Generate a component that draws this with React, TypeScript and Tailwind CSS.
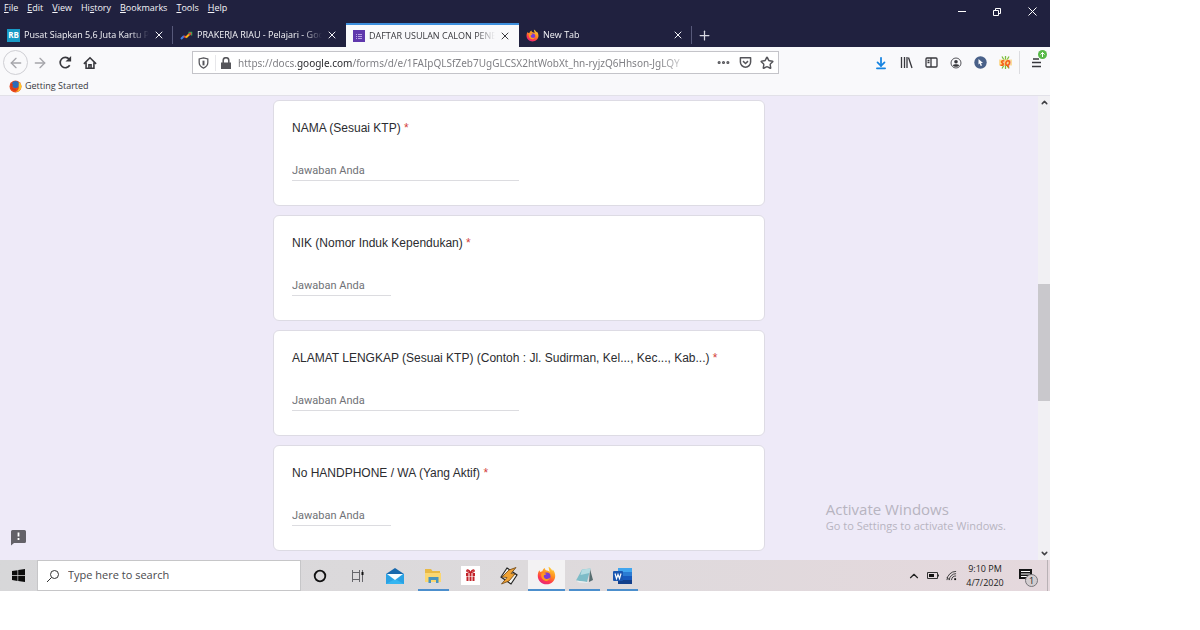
import { ReactNode } from "react";
import {
  ArrowDownToLine,
  ArrowLeft,
  ArrowRight,
  ChevronDown,
  ChevronUp,
  Ellipsis,
  Plus,
  Star,
  X,
} from "lucide-react";

const MENUS = [
  ["", "F", "ile"],
  ["", "E", "dit"],
  ["", "V", "iew"],
  ["Hi", "s", "tory"],
  ["", "B", "ookmarks"],
  ["", "T", "ools"],
  ["", "H", "elp"],
];

const QUESTIONS = [
  { id: "nama", label: "NAMA (Sesuai KTP)", long: true },
  { id: "nik", label: "NIK (Nomor Induk Kependukan)", long: false },
  {
    id: "alamat",
    label: "ALAMAT LENGKAP (Sesuai KTP) (Contoh : Jl. Sudirman, Kel..., Kec..., Kab...)",
    long: true,
  },
  { id: "hp", label: "No HANDPHONE / WA (Yang Aktif)", long: false },
];

function FirefoxIcon({ size }: { size: number }) {
  return (
    <svg width={size} height={size} viewBox="0 0 24 24" aria-hidden="true">
      <defs>
        <linearGradient id="fx" x1="0.8" y1="0" x2="0.3" y2="1">
          <stop offset="0" stopColor="#ffd83d" />
          <stop offset="0.45" stopColor="#ff8a1e" />
          <stop offset="0.75" stopColor="#ff3a4c" />
          <stop offset="1" stopColor="#e4267f" />
        </linearGradient>
      </defs>
      <path
        fill="url(#fx)"
        d="M3 5.500c.3 1 .6 1.500 1.200 2.100C5 7 6 6.700 6.800 6.700 7.200 5 8.300 3.300 10 2.600c-.2 1.200.3 2.100 1.300 2.900 2 .3 3.500.9 4.600 2.200-.2-2.700-1.200-4.600-1.300-6.700 2.200 1.200 3.700 2.800 4.600 5 .5-.4.700-1 .7-1.600C22 6.800 23 9.500 23 12.500 23 18.500 18 23 12 23S1 18.500 1 12.500C1 9.800 1.600 7.300 3 5.500z"
      />
      <circle cx="12.300" cy="12.800" r="4.700" fill="#7a3bd8" />
      <path
        fill="#ff9a22"
        d="M5.500 9.500c2.500-1.500 4.500-.5 6.500.6-1 .9-2.600.8-3.300 1.900-.6 1.600.6 3.800 3 4.300 2 .4 3.600-.4 4.800-1.700-.5 3-3 4.500-5.500 4.200-4-.5-6.500-4.500-5.500-9.300z"
      />
    </svg>
  );
}

function OldFirefoxIcon() {
  return (
    <svg width="13" height="13" viewBox="0 0 24 24" aria-hidden="true">
      <circle cx="12" cy="12" r="11" fill="#e8471c" />
      <circle cx="12" cy="8.500" r="6.500" fill="#2d6bb8" />
      <path d="M2 5c1.500 2 3 2.500 5 2.500 1 2-1.500 3-1 5.500s3 3.500 6 3l1 4-8-2z" fill="#d83a18" />
      <path fill="#ffc629" d="M18 3c5 3.500 6.500 9 3.500 14-2.500 4-6.500 5.500-10 5 5-2 7-6 6.500-10-.3-3.500.5-6 0-9z" />
    </svg>
  );
}

type TabProps = {
  title: string;
  icon: ReactNode;
  active?: boolean;
  separator?: boolean;
};

function Tab({ title, icon, active, separator }: TabProps) {
  return (
    <div
      className={
        active
          ? "flex h-6 w-[173px] items-center border-t-2 border-[#3d8fdd] bg-[#f9f9fb] pl-[7px] pr-2 text-[#38383d]"
          : "flex h-6 w-[173px] items-center pl-[7px] pr-2 text-[#f4f4f8]"
      }
    >
      <button
        type="button"
        className="flex min-w-0 flex-1 items-center gap-1 whitespace-nowrap"
      >
        <span className="shrink-0">{icon}</span>
        <span
          className={
            active
              ? "min-w-0 flex-1 text-left [mask-image:linear-gradient(to_right,black_85%,transparent)]"
              : "min-w-0 flex-1 text-left font-medium [mask-image:linear-gradient(to_right,black_85%,transparent)]"
          }
        >
          {title}
        </span>
      </button>
      <button type="button" aria-label={`Close ${title}`} className="ml-1 shrink-0">
        <X size={12} strokeWidth={2} />
      </button>
      {separator && <span className="-mr-2 ml-[7px] h-[18px] w-px bg-[#57597a]" />}
    </div>
  );
}

function TitleBar() {
  return (
    <header className="bg-[#20213f]">
      <div className="flex h-[23px] items-start justify-between">
        <nav className="flex gap-[9px] pl-1 text-[9px] leading-4 text-[#f4f4f8]">
          {MENUS.map(([before, key, after]) => (
            <button type="button" key={before + key + after}>
              {before}
              <span className="underline">{key}</span>
              {after}
            </button>
          ))}
        </nav>
        <div className="flex h-[22px] items-center gap-6 pr-3 text-white">
          <button type="button" aria-label="Minimize">
            <svg width="11" height="11" viewBox="0 0 11 11" stroke="currentColor">
              <path d="M1 5.500h8" />
            </svg>
          </button>
          <button type="button" aria-label="Restore">
            <svg width="11" height="11" viewBox="0 0 11 11" fill="none" stroke="currentColor">
              <path d="M1.500 4.500h5v5h-5zM3.500 4V2.500h5v5H7" />
            </svg>
          </button>
          <button type="button" aria-label="Close window">
            <svg width="11" height="11" viewBox="0 0 11 11" fill="none" stroke="currentColor">
              <path d="M1.500 1.500l8 8M9.500 1.500l-8 8" />
            </svg>
          </button>
        </div>
      </div>
      <div className="flex items-center text-[9px] leading-4">
        <Tab
          title="Pusat Siapkan 5,6 Juta Kartu Pra"
          separator
          icon={
            <span className="flex h-[13px] w-[13px] items-center justify-center bg-[#189ac6] text-[8px] font-bold text-white">
              RB
            </span>
          }
        />
        <Tab
          title="PRAKERJA RIAU - Pelajari - Goo"
          icon={
            <svg width="13" height="13" viewBox="0 0 13 13" fill="none" strokeWidth="2" aria-hidden="true">
              <path d="M1 10l3-3" stroke="#3f7de8" />
              <path d="M4 7l2 1.500" stroke="#e5443a" />
              <path d="M6 8.500L9.500 5" stroke="#f6b913" />
              <path d="M8.500 3.500H11.500V6.500" stroke="#38a853" strokeWidth="1.500" />
              <path d="M9 6l2-2" stroke="#e5443a" />
            </svg>
          }
        />
        <Tab
          title="DAFTAR USULAN CALON PENE"
          active
          icon={
            <svg width="12" height="12" viewBox="0 0 12 12" aria-hidden="true">
              <path d="M0 0h12v12H0z" fill="#6038ad" />
              <path d="M3 4.500h1M5 4.500h4M3 6.500h1M5 6.500h4M3 8.500h1M5 8.500h4" stroke="#b9a4e2" />
            </svg>
          }
        />
        <Tab title="New Tab" separator icon={<FirefoxIcon size={13} />} />
        <button type="button" aria-label="Open a new tab" className="ml-[5px] text-[#d8d8e2]">
          <Plus size={15} strokeWidth={2} />
        </button>
      </div>
    </header>
  );
}

function NavBar() {
  return (
    <div className="flex h-[31px] items-center bg-[#f9f9fb] pl-[3px] text-[#38383d]">
      <div className="flex w-[189px] shrink-0 items-center">
        <button
          type="button"
          aria-label="Back"
          className="flex h-[25px] w-[25px] items-center justify-center rounded-full border border-[#cfcfd4] text-[#a5a5aa]"
        >
          <ArrowLeft size={16} strokeWidth={2} />
        </button>
        <button type="button" aria-label="Forward" className="ml-1 text-[#a5a5aa]">
          <ArrowRight size={16} strokeWidth={2} />
        </button>
        <button type="button" aria-label="Reload" className="ml-2.5">
          <svg width="15" height="15" viewBox="0 0 16 16" fill="none" stroke="currentColor" strokeWidth="1.800">
            <path d="M12.500 11A5.500 5.500 0 1 1 12 4.500" />
            <path d="M14 1v6H8z" fill="currentColor" stroke="none" />
          </svg>
        </button>
        <button type="button" aria-label="Home" className="ml-2.5">
          <svg width="14" height="14" viewBox="0 0 16 16" fill="none" stroke="currentColor" strokeWidth="1.800">
            <path d="M1 9l7-7 7 7M3.500 7.500V14h9V7.500" />
            <path d="M6.800 14v-4h2.400v4" />
          </svg>
        </button>
      </div>
      <div className="flex h-[23px] min-w-0 max-w-[587px] flex-1 items-center border border-[#c4c4c9] bg-white">
        <button type="button" aria-label="Tracking protection" className="ml-[5px]">
          <svg width="11" height="12" viewBox="0 0 14 15" fill="none" stroke="#55555a" strokeWidth="1.600">
            <path d="M7 1l5.500 1.300V7c0 3.500-2.500 5.800-5.500 7C4 12.800 1.500 10.500 1.500 7V2.300z" />
            <path d="M7 4.500v6" strokeWidth="2.500" />
          </svg>
        </button>
        <span className="ml-1.5 h-4 w-px bg-[#e7e7ea]" />
        <svg width="10" height="12" viewBox="0 0 10 12" className="ml-[5px] shrink-0" aria-hidden="true">
          <path d="M0 5.500h10V12H0z" fill="#55555a" />
          <path d="M2.200 6V3.500a2.800 2.800 0 0 1 5.600 0V6" fill="none" stroke="#55555a" strokeWidth="1.500" />
        </svg>
        <label
          htmlFor="address"
          className="relative ml-[7px] min-w-0 flex-1 whitespace-nowrap font-['Noto_Sans',sans-serif] text-[10px] leading-5 text-[#808085] [mask-image:linear-gradient(to_right,black_93%,transparent)]"
        >
          https://docs.<span className="text-[#2a2a2e]">google.com</span>
          /forms/d/e/1FAIpQLSfZeb7UgGLCSX2htWobXt_hn-ryjzQ6Hhson-JgLQY
          <input id="address" type="text" className="absolute inset-0 bg-transparent outline-none" />
        </label>
        <div className="ml-6 mr-1 flex items-center gap-2 text-[#55555a]">
          <button type="button" aria-label="Page actions">
            <Ellipsis size={15} strokeWidth={3} />
          </button>
          <button type="button" aria-label="Save to Pocket">
            <svg width="13" height="13" viewBox="0 0 14 14" fill="none" stroke="currentColor" strokeWidth="1.600">
              <path d="M1.500 2h11v4.500a5.500 5.500 0 0 1-11 0z" strokeLinejoin="round" />
              <path d="M4.300 5.500L7 8l2.700-2.500" />
            </svg>
          </button>
          <button type="button" aria-label="Bookmark this page">
            <Star size={14} strokeWidth={2.500} />
          </button>
        </div>
      </div>
      <div className="ml-auto flex shrink-0 items-center gap-[7px] pr-[7px]">
        <div className="flex items-center gap-3">
          <button type="button" aria-label="Downloads" className="text-[#1583e0]">
            <ArrowDownToLine size={14} strokeWidth={3} />
          </button>
          <button type="button" aria-label="Library">
            <svg width="13" height="13" viewBox="0 0 13 13" fill="none" stroke="currentColor" strokeWidth="1.300">
              <path d="M1.500 1v11M4.500 1v11M7 1v11M8.500 1.500l3.500 10.500" />
            </svg>
          </button>
          <button type="button" aria-label="Sidebars">
            <svg width="13" height="13" viewBox="0 0 13 13" fill="none" stroke="currentColor" strokeWidth="1.300">
              <rect x="1" y="2" width="11" height="9" rx="1" />
              <path d="M6 2v9M2.500 4.500h2M2.500 6.500h2" />
            </svg>
          </button>
          <button type="button" aria-label="Account">
            <svg width="12" height="12" viewBox="0 0 12 12" aria-hidden="true">
              <circle cx="6" cy="6" r="5" fill="none" stroke="#55555a" />
              <circle cx="6" cy="4.800" r="1.800" fill="#38383d" />
              <path d="M2.800 8.200C4 6.900 8 6.900 9.200 8.200 8 10.300 4 10.300 2.800 8.200z" fill="#38383d" />
            </svg>
          </button>
          <button type="button" aria-label="Pointer extension">
            <svg width="13" height="13" viewBox="0 0 13 13" aria-hidden="true">
              <circle cx="6.500" cy="6.500" r="6.200" fill="#4a6189" />
              <path d="M4.500 3l4.500 4H7l1 2.500-1.300.5-1-2.500-1.200 1z" fill="#fff" />
            </svg>
          </button>
          <button
            type="button"
            aria-label="SQ extension"
            className="relative flex h-[13px] w-[13px] items-center justify-center text-[8px] font-extrabold italic leading-none text-[#f2600f]"
          >
            <svg width="13" height="13" viewBox="0 0 13 13" fill="none" className="absolute inset-0" aria-hidden="true">
              <path d="M6.500 0v13M3 .5l7 12M10 .5l-7 12" stroke="#7cbf3b" strokeWidth="1.300" />
              <path d="M0 3.500h13v6H0z" fill="#fbdc9c" />
            </svg>
            <span className="relative">SQ</span>
          </button>
        </div>
        <div className="flex items-center border-l border-[#dcdce0] py-[5px] pl-[11px]">
          <button type="button" aria-label="Open menu" className="relative">
            <svg width="12" height="13" viewBox="0 0 12 13" stroke="currentColor" strokeWidth="1.300">
              <path d="M2 3h6M1 6.500h9M1 10.500h9" />
            </svg>
            <span className="absolute -right-1 -top-1.5 flex h-[9px] w-[9px] items-center justify-center rounded-full bg-[#57b947]">
              <svg width="7" height="7" viewBox="0 0 7 7" fill="none" stroke="#fff">
                <path d="M3.500 6V1.500M1.500 3.500l2-2 2 2" />
              </svg>
            </span>
          </button>
        </div>
      </div>
    </div>
  );
}

function QuestionCard({ id, label, long }: { id: string; label: string; long: boolean }) {
  return (
    <div className="h-[106px] rounded-md border border-[#dddbe4] bg-white px-[18px] pt-[18px]">
      <label
        htmlFor={id}
        className="block font-['Liberation_Sans',sans-serif] text-xs leading-[18px] text-[#2b2c30]"
      >
        {label} <span className="text-[#d3413a]">*</span>
      </label>
      <input
        id={id}
        type="text"
        placeholder="Jawaban Anda"
        className={
          long
            ? "mt-[23px] block h-[21px] w-1/2 border-b border-[#dcdce0] font-[Roboto,sans-serif] text-[11px] text-[#2b2c30] outline-none placeholder:text-[#6f7176]"
            : "mt-[23px] block h-[21px] w-[99px] border-b border-[#dcdce0] font-[Roboto,sans-serif] text-[11px] text-[#2b2c30] outline-none placeholder:text-[#6f7176]"
        }
      />
    </div>
  );
}

function FormPage() {
  return (
    <div className="relative flex border-t border-[#e2e1e8] bg-[#eeeaf8]">
      <main className="flex-1 pb-[9px] pt-1">
        <form className="mx-auto flex max-w-[492px] flex-col gap-[9px]">
          {QUESTIONS.map((q) => (
            <QuestionCard key={q.id} {...q} />
          ))}
        </form>
      </main>
      <div className="flex w-3 flex-col items-center bg-[#f1f0f3] py-0.5 text-[#404044]">
        <ChevronUp size={9} strokeWidth={4} />
        <div className="mt-[177px] h-[117px] w-full bg-[#c9c8cc]" />
        <ChevronDown size={9} strokeWidth={4} className="mt-auto" />
      </div>
      <button type="button" aria-label="Report a problem" className="absolute bottom-3.5 left-[11px]">
        <svg width="16" height="16" viewBox="0 0 16 16" aria-hidden="true">
          <path d="M1.500 0h12A1.500 1.500 0 0 1 15 1.500v10a1.500 1.500 0 0 1-1.500 1.500H3L0 15.500v-14A1.500 1.500 0 0 1 1.500 0z" fill="#636168" />
          <path d="M7.500 2.500v4M7.500 8v2" stroke="#fff" strokeWidth="1.800" />
        </svg>
      </button>
      <div className="absolute bottom-[26px] right-11 text-[#b7b4c0]">
        <p className="text-[15px] leading-[18px]">Activate Windows</p>
        <p className="text-[11px] leading-4">Go to Settings to activate Windows.</p>
      </div>
    </div>
  );
}

const APPS: { name: string; open?: boolean; focused?: boolean; icon: ReactNode }[] = [
  {
    name: "Cortana",
    icon: (
      <svg width="14" height="14" viewBox="0 0 14 14">
        <circle cx="7" cy="7" r="5.300" fill="none" stroke="#111" strokeWidth="1.800" />
      </svg>
    ),
  },
  {
    name: "Task View",
    icon: (
      <svg width="14" height="14" viewBox="0 0 14 14" fill="none" stroke="#66666b">
        <path d="M1.500 1v2.500h7V1M1.500 13v-2.500h7V13M1.500 3v8M8.500 3v8M11.500 1v12" />
        <path d="M11.500 3v3" stroke="#111" strokeWidth="2" />
      </svg>
    ),
  },
  {
    name: "Mail",
    icon: (
      <svg width="20" height="18" viewBox="0 0 20 18">
        <path d="M1 7l9-6 9 6v10H1z" fill="#1668ad" />
        <path d="M1 7h18v10H1z" fill="#2aa2e4" />
        <path d="M1 17l9-5 9 5z" fill="#35b5f1" />
        <path d="M2 7h16l-8 6z" fill="#f7fcfe" />
      </svg>
    ),
  },
  {
    name: "File Explorer",
    open: true,
    icon: (
      <svg width="18" height="16" viewBox="0 0 18 16">
        <path d="M1 1h6l1.500 2H16v11H1z" fill="#e9b944" />
        <path d="M1 5h16v9H1z" fill="#fbd771" />
        <path d="M4.500 15V9h10v6h-2.500v-3H7v3z" fill="#4a94bd" />
      </svg>
    ),
  },
  {
    name: "Gifts",
    icon: (
      <svg width="19" height="19" viewBox="0 0 19 19">
        <path d="M0 0h19v19H0z" fill="#fff" />
        <path d="M5 7h9v3H5zM5.500 10.500h8V15h-8z" fill="#c32229" />
        <path d="M9.500 7C8 3 5 3.500 6 5.500L9.500 7C11 3 14 3.500 13 5.500z" fill="none" stroke="#c32229" strokeWidth="1.300" />
        <path d="M8 7v8M11 7v8" stroke="#fff" />
      </svg>
    ),
  },
  {
    name: "Winamp",
    icon: (
      <svg width="20" height="20" viewBox="0 0 20 20">
        <path d="M8 2l10 7-6 9L2 11z" fill="#f5f5f3" stroke="#222" strokeWidth="1.200" />
        <path d="M17 1.500L10 4 3 11l5 .5-5.500 6.500L10 15l6-7-4-.5z" fill="#f0a233" stroke="#6b4312" strokeWidth="0.800" strokeLinejoin="round" />
      </svg>
    ),
  },
  { name: "Firefox", open: true, focused: true, icon: <FirefoxIcon size={19} /> },
  {
    name: "Notepad",
    open: true,
    icon: (
      <svg width="19" height="18" viewBox="0 0 19 18">
        <path d="M15 2l3 11-4 2z" fill="#586d70" />
        <path d="M7 2.500l8.500-1L12 15 1 13.500z" fill="#7dbcc8" />
        <path d="M7 2.500l8.500-1-1 4.500-9 2z" fill="#b5dce2" />
        <path d="M1 13.500L12 15l2.500 1L4 15.500z" fill="#e9eff0" />
      </svg>
    ),
  },
  {
    name: "Word",
    open: true,
    icon: (
      <svg width="19" height="18" viewBox="0 0 19 18">
        <rect x="5" y="1" width="14" height="16" rx="1" fill="#2b7cd3" />
        <path d="M5 1h14v4H5z" fill="#41a5ee" />
        <path d="M5 9h14v4H5z" fill="#185abd" />
        <path d="M5 13h14v4H5z" fill="#123f8c" />
        <rect y="4" width="10" height="10" rx="1" fill="#1a56b0" />
        <path d="M2 6.500l1.500 5L5 7.500l1.500 4 1.500-5" fill="none" stroke="#fff" strokeWidth="1.200" />
      </svg>
    ),
  },
];

function Taskbar() {
  return (
    <footer className="flex h-[31px] bg-linear-to-r from-[#d7d7d9] via-[#dddadc] to-[#e5d8dd]">
      <button type="button" aria-label="Start" className="flex w-[37px] shrink-0 items-center justify-center">
        <svg width="13" height="13" viewBox="0 0 13 13" fill="#0c0c0c">
          <path d="M0 2l5.500-.8v5H0zM6.200 1.100L13 0v6.200H6.200zM0 6.900h5.500v5L0 11.100zM6.200 6.900H13V13l-6.800-1z" />
        </svg>
      </button>
      <label
        htmlFor="search"
        className="flex w-[264px] items-center gap-2 border border-[#c6c6c8] bg-white pl-2"
      >
        <svg width="14" height="14" viewBox="0 0 14 14" fill="none" stroke="#333" aria-hidden="true">
          <circle cx="8.500" cy="5.500" r="4" />
          <path d="M5.500 8.500L1 13" />
        </svg>
        <input
          id="search"
          type="text"
          placeholder="Type here to search"
          className="min-w-0 flex-1 text-[11px] outline-none placeholder:text-[#4a4a4d]"
        />
      </label>
      <div className="grid w-[340px] grid-cols-9">
        {APPS.map((app) => (
          <button
            type="button"
            key={app.name}
            aria-label={app.name}
            className={
              app.focused
                ? "flex flex-col items-center bg-[#f3f2f3]"
                : "flex flex-col items-center"
            }
          >
            <span className="flex flex-1 items-center">{app.icon}</span>
            {app.open && (
              <span className={app.focused ? "-mt-0.5 h-0.5 w-full bg-[#4c8fcd]" : "-mt-0.5 h-0.5 w-[31px] bg-[#4c8fcd]"} />
            )}
          </button>
        ))}
      </div>
      <div className="ml-auto flex items-center text-[#222]">
        <ChevronUp size={14} strokeWidth={2} />
        <svg width="13" height="9" viewBox="0 0 13 9" className="ml-1.5" aria-hidden="true">
          <path d="M.5 1.500h10v6H.5zM11.500 3.500v2" fill="none" stroke="#333" />
          <path d="M2 3h5v3H2z" fill="#111" />
        </svg>
        <svg width="11" height="11" viewBox="0 0 12 12" className="ml-1.5" fill="none" stroke="#333" aria-hidden="true">
          <path d="M1 11A10 10 0 0 1 11 1.500M3.500 11A7.500 7.500 0 0 1 11 4M6 11a5 5 0 0 1 5-4.500M1 8l3 3" />
          <path d="M9 9h2v2H9z" fill="#111" stroke="none" />
        </svg>
        <div className="ml-2 w-10 text-center text-[9px] leading-[14px]">
          <p>9:10 PM</p>
          <p>4/7/2020</p>
        </div>
        <button type="button" aria-label="Notifications" className="relative ml-3.5 h-5 w-5">
          <svg width="14" height="14" viewBox="0 0 14 14">
            <path d="M0 0h13v10H9v3l-3-3H0z" fill="#151515" />
            <path d="M2 2.500h9M2 5h9M2 7.500h6" stroke="#fff" />
          </svg>
          <span className="absolute -bottom-px right-px flex h-[13px] w-[13px] items-center justify-center rounded-full border border-[#77757a] bg-[#d3cdd0] text-[9px] leading-none">
            1
          </span>
        </button>
        <span className="ml-2 mr-0.5 h-[31px] w-px bg-[#b9b1b5]" />
      </div>
    </footer>
  );
}

export default function App() {
  return (
    <div className="min-h-screen bg-white font-['Open_Sans',sans-serif]">
      <div className="w-[87.5%]">
        <TitleBar />
        <NavBar />
        <div className="flex h-[17px] items-start bg-[#f9f9fb] pl-[9px]">
          <a href="#getting-started" className="flex items-center gap-[3px] text-[9px] leading-4 text-[#38383d]">
            <OldFirefoxIcon />
            Getting Started
          </a>
        </div>
        <FormPage />
        <Taskbar />
      </div>
    </div>
  );
}
